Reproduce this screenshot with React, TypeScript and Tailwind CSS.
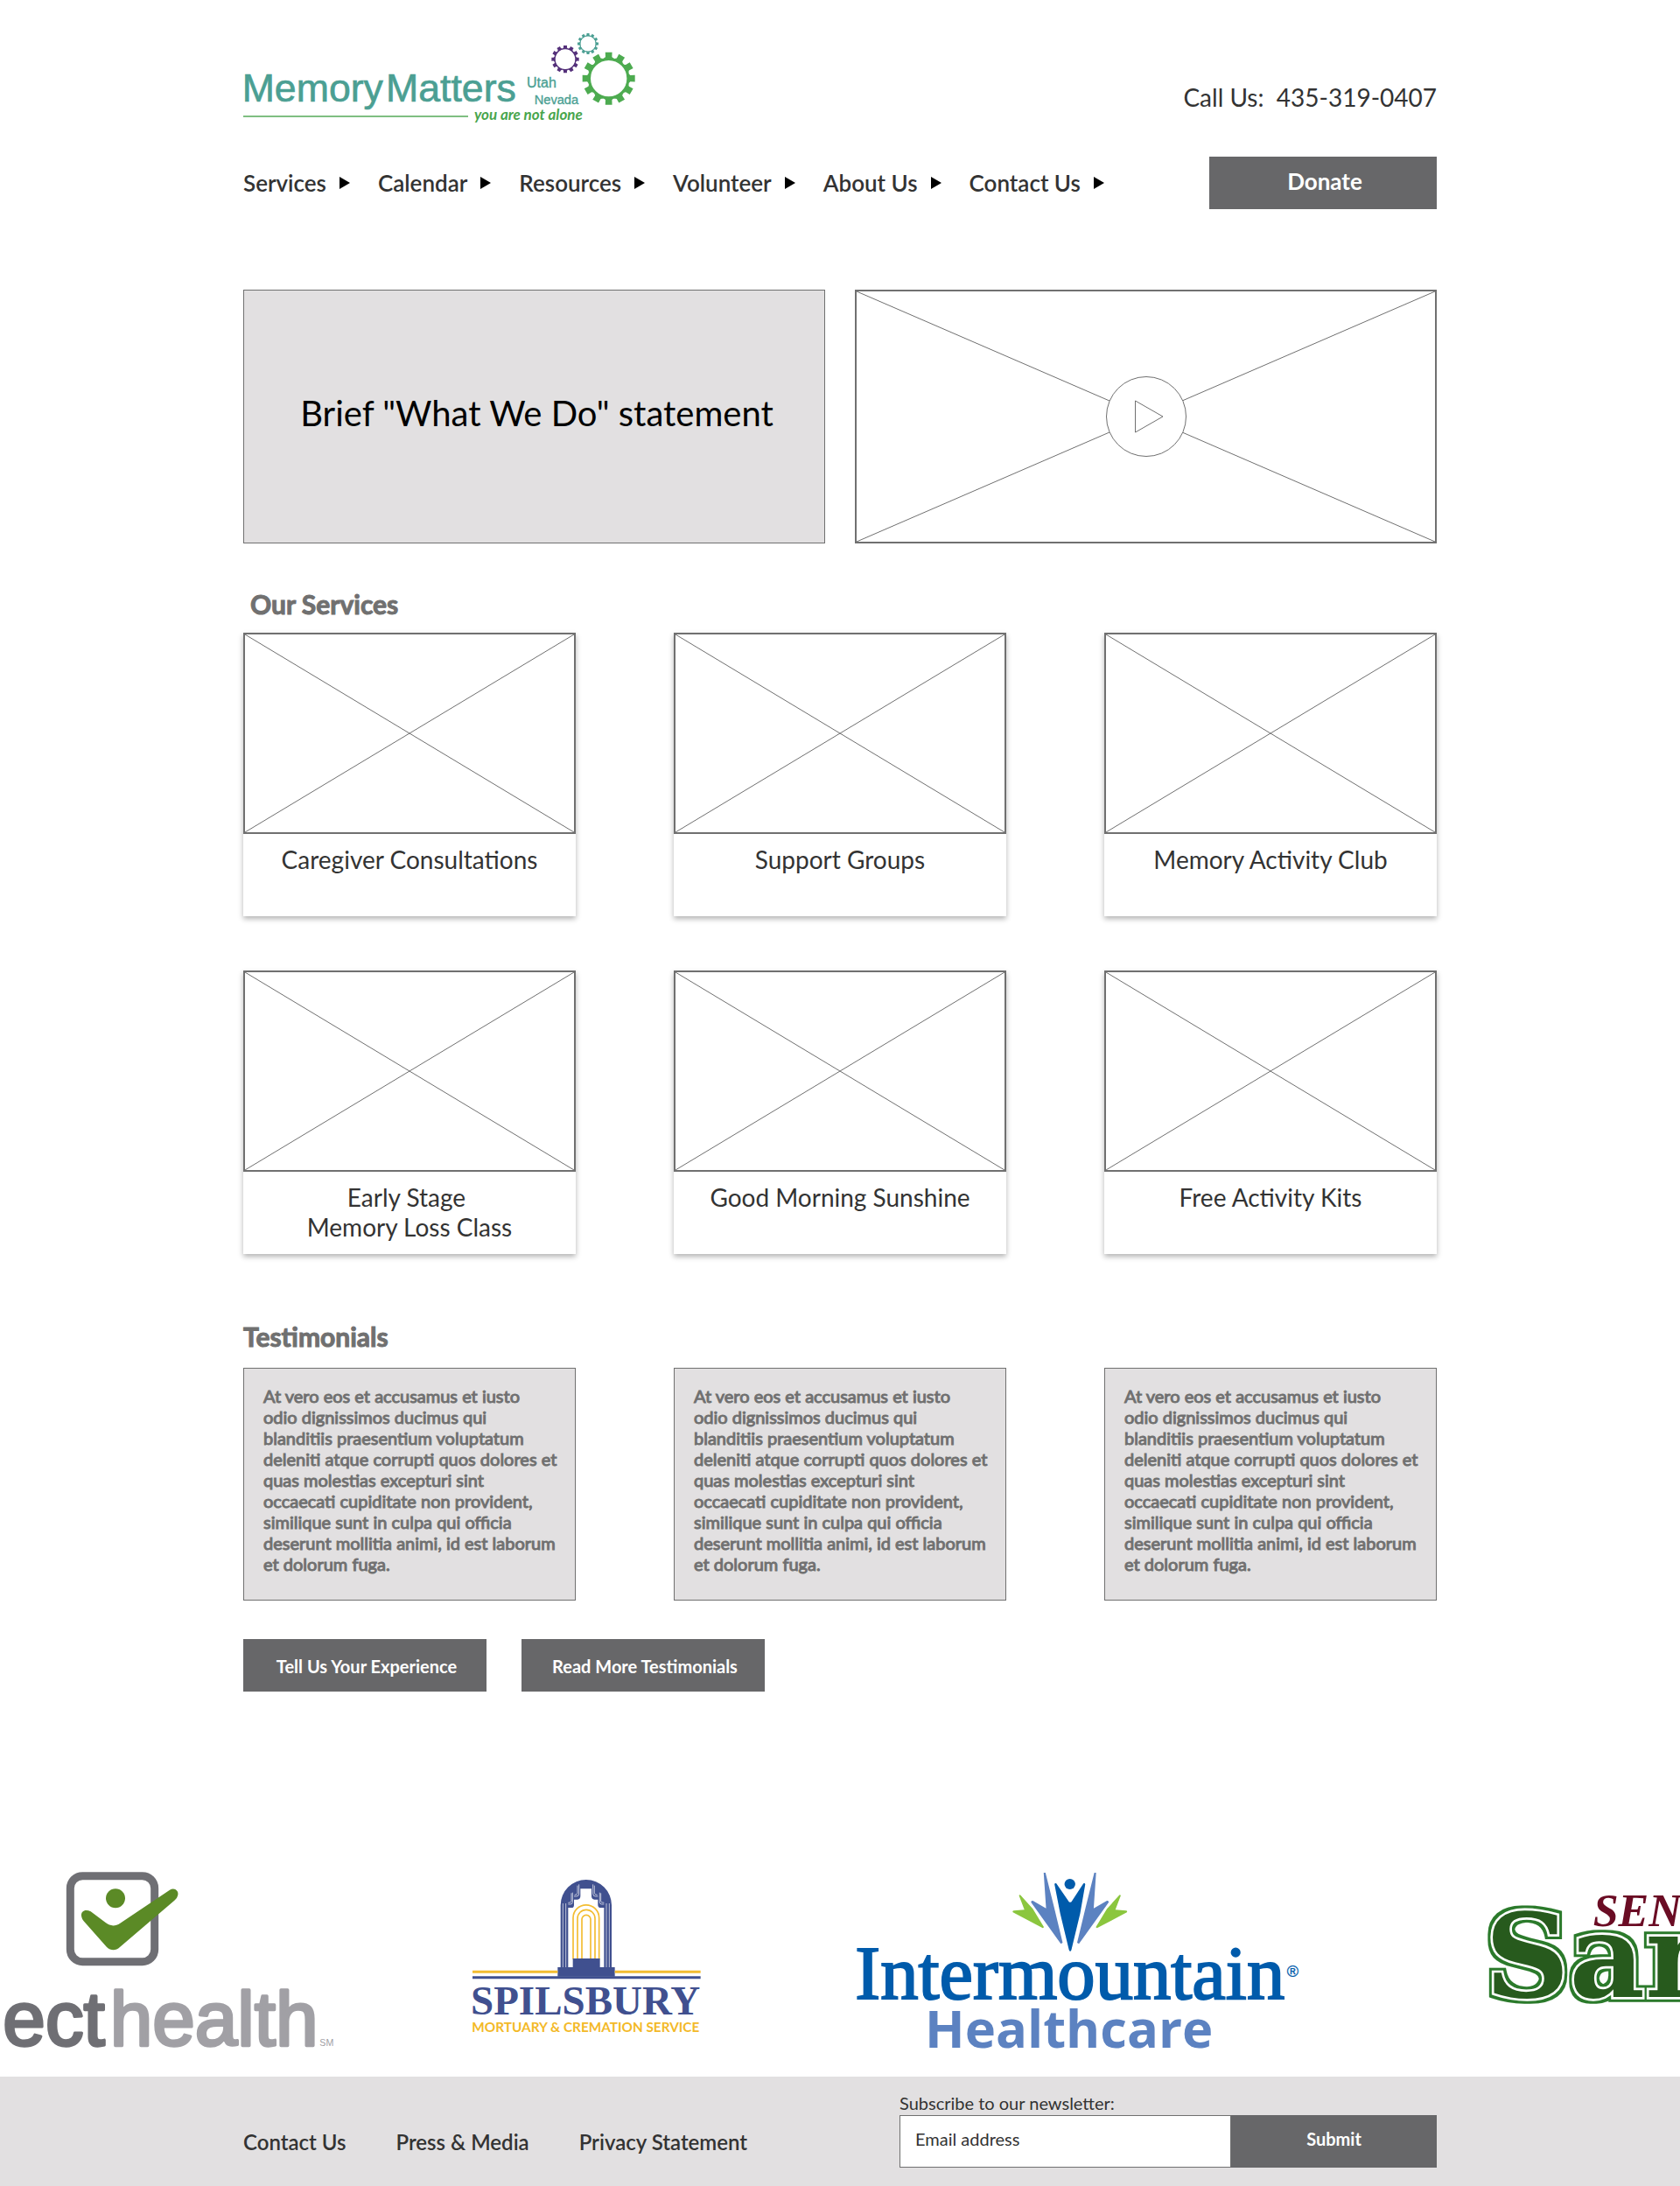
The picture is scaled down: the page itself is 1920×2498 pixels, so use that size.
import type { ReactNode } from "react";

const navItems = ["Services", "Calendar", "Resources", "Volunteer", "About Us", "Contact Us"];

const services: string[][] = [
  ["Caregiver Consultations"],
  ["Support Groups"],
  ["Memory Activity Club"],
  ["Early Stage\u00a0", "Memory Loss Class"],
  ["Good Morning Sunshine"],
  ["Free Activity Kits"],
];

const quote = `At vero eos et accusamus et iusto
odio dignissimos ducimus qui
blanditiis praesentium voluptatum
deleniti atque corrupti quos dolores et
quas molestias excepturi sint
occaecati cupiditate non provident,
similique sunt in culpa qui officia
deserunt mollitia animi, id est laborum
et dolorum fuga.`;

const footerLinks = ["Contact Us", "Press & Media", "Privacy Statement"];

function Container({ children }: { children: ReactNode }) {
  return (
    <div className="px-4">
      <div className="mx-auto max-w-[1364px]">{children}</div>
    </div>
  );
}

function Gear({ cx, cy, inner, body, outer, color }: { cx: number; cy: number; inner: number; body: number; outer: number; color: string }) {
  const half = outer * 0.13;
  const teeth = Array.from({ length: 12 }, (_, i) => i * 30);
  return (
    <g fill={color}>
      <circle cx={cx} cy={cy} r={(inner + body) / 2} fill="none" stroke={color} strokeWidth={body - inner} />
      {teeth.map((a) => (
        <path
          key={a}
          transform={`rotate(${a} ${cx} ${cy})`}
          d={`M${cx - half} ${cy - outer} H${cx + half} L${cx + half * 0.95} ${cy - body - 3} Q${cx + half * 1.1} ${cy - body} ${cx + half * 1.6} ${cy - body + 3} H${cx - half * 1.6} Q${cx - half * 1.1} ${cy - body} ${cx - half * 0.95} ${cy - body - 3} Z`}
        />
      ))}
    </g>
  );
}

function MemoryMattersLogo() {
  return (
    <svg viewBox="54 55 1350 330" className="h-[110px] w-[450px]" role="img" aria-label="Memory Matters Utah Nevada">
      <g fill="#4b9f93" fontFamily="'Liberation Sans', sans-serif">
        <text x="50" y="289" fontSize="134" stroke="#4b9f93" strokeWidth="2">Memory</text>
        <text x="543" y="289" fontSize="134" stroke="#4b9f93" strokeWidth="2">Matters</text>
        <text x="1026" y="240" fontSize="48" stroke="#4b9f93" strokeWidth="1">Utah</text>
        <text x="1052" y="297" fontSize="44" stroke="#4b9f93" strokeWidth="1">Nevada</text>
      </g>
      <path d="M52 340H825" stroke="#55aa58" strokeWidth="4" />
      <text x="846" y="352" fontSize="51" fontWeight="700" fontStyle="italic" fill="#48a54c" fontFamily="Lato, sans-serif">
        you are not alone
      </text>
      <Gear cx={1158} cy={144} inner={34} body={38} outer={47} color="#54307a" />
      <Gear cx={1236} cy={91} inner={26} body={29} outer={36} color="#4b9f93" />
      <Gear cx={1307} cy={210} inner={62} body={71} outer={90} color="#4dab50" />
    </svg>
  );
}

function CrossBox() {
  return (
    <svg viewBox="0 0 100 100" preserveAspectRatio="none" aria-hidden="true" className="absolute inset-0 h-full w-full">
      <path d="M0 0L100 100M100 0L0 100" stroke="#707070" strokeWidth="1" vectorEffect="non-scaling-stroke" />
    </svg>
  );
}

function SelectHealthLogo() {
  return (
    <svg viewBox="0 0 1200 720" className="h-[240px] w-[400px] shrink-0" role="img" aria-label="Select Health">
      <rect x="241" y="71" width="289" height="294" rx="42" fill="none" stroke="#6f6f74" strokeWidth="27" />
      <circle cx="396" cy="148" r="33" fill="#5b8a26" />
      <path
        d="M279 208C277 190 294 184 311 193L363 232C378 244 396 244 412 233L582 119C600 108 617 125 608 142C606 148 602 152 598 155L411 315C397 328 380 328 366 315L287 226C282 220 280 214 279 208Z"
        fill="#5b8a26"
      />
      <g fontFamily="'Liberation Sans', Arial, sans-serif" strokeLinejoin="round" strokeWidth="10">
        <text x="10" y="650" fontSize="262" fill="#6f6f74" stroke="#6f6f74">ect</text>
        <text x="377" y="650" fontSize="262" fill="#a1a0a5" stroke="#a1a0a5">health</text>
        <text x="1096" y="654" fontSize="32" fill="#a1a0a5">SM</text>
      </g>
    </svg>
  );
}

function SpilsburyLogo() {
  return (
    <svg viewBox="30 0 840 720" className="h-[240px] w-[280px] shrink-0" role="img" aria-label="Spilsbury Mortuary & Cremation Service">
      <path d="M362 386V171A87.500 87 0 0 1 537 171V386Z" fill="#40508f" />
      <path d="M388 386V180H400Q408 180 408 170V152H420Q430 150 430 140V115H468V140Q468 150 478 152H490V170Q490 180 500 180H511V386Z" fill="#fff" />
      <g fill="none" stroke="#fff" strokeWidth="2">
        <path d="M370 165V386M380 165V386M519 165V386M529 165V386" />
        <path d="M388 168H396Q403 168 403 160V128M399 130V158Q398 163 388 163" />
        <path d="M408 141H416Q425 141 425 132V100M420 104V130Q419 136 410 136" />
        <path d="M511 168H503Q496 168 496 160V128M500 130V158Q501 163 511 163" />
        <path d="M490 141H482Q473 141 473 132V100M478 104V130Q479 136 488 136" />
      </g>
      <g fill="none" stroke="#f3bd32" strokeWidth="5">
        <path d="M405 356V215A44.500 44.500 0 0 1 494 215V356" />
        <path d="M420 356V217A30 30 0 0 1 480 217V356" />
        <path d="M435 356V220A15 15 0 0 1 465 220V356" />
      </g>
      <path d="M404 354H497V384H548V416H352V384H404Z" fill="#40508f" />
      <path d="M60 399.500H352M548 399.500H842" stroke="#f3bd32" strokeWidth="9" />
      <path d="M60 419H842" stroke="#40508f" strokeWidth="9" />
      <text x="54" y="546" fontSize="141" fontWeight="700" fill="#40508f" fontFamily="'Liberation Serif', serif">SPILSBURY</text>
      <text x="58" y="606" fontSize="46" fontWeight="700" fill="#f3b928" fontFamily="Lato, sans-serif">MORTUARY &amp; CREMATION SERVICE</text>
    </svg>
  );
}

function IntermountainLogo() {
  const side = (
    <>
      <path d="M676 60H682L711 180L739 300L733 304L634 161Q634 155 640 156L684 182Z" fill="#5c82c1" />
      <path d="M594 138Q597 133 600 138L640 184L677 247L673 250L574 196Q571 191 577 190L612 187Z" fill="#8bc63e" />
    </>
  );
  return (
    <svg viewBox="-60 0 1770 720" className="h-[240px] w-[590px] shrink-0" role="img" aria-label="Intermountain Healthcare">
      <g transform="scale(1.033 1)">
        {side}
        <g transform="translate(1526 0) scale(-1 1)">{side}</g>
        <circle cx="763" cy="99" r="18" fill="#005bab" />
        <path d="M712 100Q713 94 718 97L757 155Q764 168 771 155L808 97Q813 94 814 100L797 200L768 325Q764 334 760 325L731 200Z" fill="#005bab" />
      </g>
      <text x="52" y="491" fontSize="260" fill="#005bab" stroke="#005bab" strokeWidth="6" fontFamily="'Liberation Serif', serif">Intermountain</text>
      <text x="1532" y="416" fontSize="54" fill="#005bab" stroke="#005bab" strokeWidth="1" fontFamily="'Liberation Sans', sans-serif">®</text>
      <text x="291" y="660" fontSize="179" fontWeight="700" fill="#5c82c1" fontFamily="'Open Sans', sans-serif">Healthcare</text>
    </svg>
  );
}

function SeniorLogo() {
  return (
    <svg viewBox="0 0 780 720" className="h-[240px] w-[260px] shrink-0" role="img" aria-label="Senior sponsor">
      <defs>
        <filter id="green-outline" x="-10%" y="-10%" width="120%" height="120%" colorInterpolationFilters="sRGB">
          <feMorphology in="SourceAlpha" operator="dilate" radius="9" result="grown" />
          <feFlood floodColor="#2b7a2b" />
          <feComposite in2="grown" operator="in" result="edge" />
          <feMerge>
            <feMergeNode in="edge" />
            <feMergeNode in="SourceGraphic" />
          </feMerge>
        </filter>
      </defs>
      <text
        x="112"
        y="487"
        fontSize="400"
        fontWeight="700"
        fontFamily="'DejaVu Serif', serif"
        fill="#275a1d"
        stroke="#fff"
        strokeWidth="16"
        paintOrder="stroke"
        filter="url(#green-outline)"
      >
        San
      </text>
      <text x="482" y="243" fontSize="156" fontWeight="700" fontStyle="italic" fill="#6a0c24" fontFamily="'Liberation Serif', serif">SEN</text>
    </svg>
  );
}

export default function App() {
  return (
    <div className="bg-white font-['Lato',sans-serif] text-[#333333]">
      <Container>
        <header className="pt-[38px]">
          <div className="flex items-center justify-between">
            <a href="#home">
              <MemoryMattersLogo />
            </a>
            <p className="pt-9 text-[28px] leading-[34px] whitespace-pre">{"Call Us:  435-319-0407"}</p>
          </div>
          <div className="mt-[31px] flex items-center justify-between">
            <nav className="flex gap-8">
              {navItems.map((item) => (
                <a key={item} href="#menu" className="flex items-center gap-[15px] text-[26px] leading-8 font-semibold">
                  {item}
                  <svg viewBox="0 0 12 14" aria-hidden="true" className="h-[14px] w-3">
                    <path d="M0 0L12 7L0 14Z" fill="#000" />
                  </svg>
                </a>
              ))}
            </nav>
            <button type="button" className="h-[60px] w-[260px] bg-[#676769] pb-1 pl-1 text-[26px] font-bold text-white">
              Donate
            </button>
          </div>
        </header>
      </Container>

      <main>
        <Container>
          <section className="mt-[92px] grid grid-cols-2 gap-[34px]">
            <div className="flex h-[290px] items-center justify-center border border-[#707070] bg-[#e2e0e1] pb-2 pl-1.5">
              <h1 className="text-[40px] leading-[48px] text-black">Brief "What We Do" statement</h1>
            </div>
            <div className="relative flex items-center justify-center border-2 border-[#707070]">
              <CrossBox />
              <button type="button" aria-label="Play video" className="relative h-[92px] w-[92px] rounded-full border border-[#707070] bg-white">
                <svg viewBox="0 0 90 90" className="h-full w-full" fill="none" stroke="#707070" strokeWidth="1" aria-hidden="true">
                  <path d="M32.500 27V63L64 45Z" />
                </svg>
              </button>
            </div>
          </section>

          <section className="mt-[51px]">
            <h2 className="pl-2 text-[30px] leading-9 font-bold text-[#707070] [-webkit-text-stroke:1px_#707070]">Our Services</h2>
            <div className="mt-[15px] grid grid-cols-3 gap-x-28 gap-y-[62px]">
              {services.map((lines) => (
                <article key={lines[0]} className="shadow-[0_3px_6px_rgba(0,0,0,0.3)]">
                  <div className="relative h-[230px] border-2 border-[#707070]">
                    <CrossBox />
                  </div>
                  <h3 className="min-h-[94px] pt-3 text-center text-[28px] leading-[34px]">
                    {lines.map((line) => (
                      <span key={line} className="block">
                        {line}
                      </span>
                    ))}
                  </h3>
                </article>
              ))}
            </div>
          </section>

          <section className="mt-[76px]">
            <h2 className="text-[30px] leading-9 font-bold text-[#707070] [-webkit-text-stroke:1px_#707070]">Testimonials</h2>
            <div className="mt-[18px] grid grid-cols-3 gap-x-28">
              {[0, 1, 2].map((i) => (
                <blockquote
                  key={i}
                  className="border border-[#707070] bg-[#e2e0e1] pt-[19px] pr-4 pb-[29px] pl-[22px] text-[20px] leading-6 whitespace-pre-line text-[#707070] [-webkit-text-stroke:1px_#707070]"
                >
                  {quote}
                </blockquote>
              ))}
            </div>
            <div className="mt-11 flex gap-10">
              {["Tell Us Your Experience", "Read More Testimonials"].map((label) => (
                <button key={label} type="button" className="h-[60px] w-[278px] bg-[#676769] pt-0.5 pl-1 text-[20px] font-bold text-white">
                  {label}
                </button>
              ))}
            </div>
          </section>
        </Container>

        <section aria-label="Sponsors" className="mt-[187px] flex justify-between overflow-hidden">
          <SelectHealthLogo />
          <SpilsburyLogo />
          <IntermountainLogo />
          <SeniorLogo />
        </section>
      </main>

      <footer className="mt-[13px] bg-[#e2e0e1] pt-[18px] pb-[21px]">
        <Container>
          <div className="flex items-end justify-between">
            <nav className="flex h-[60px] items-center gap-[57px] pt-0.5 text-[24px] font-semibold">
              {footerLinks.map((link) => (
                <a key={link} href="#footer">
                  {link}
                </a>
              ))}
            </nav>
            <form className="w-[614px]">
              <label htmlFor="email" className="mb-0.5 block text-[20px] leading-6">
                Subscribe to our newsletter:
              </label>
              <div className="flex h-[60px]">
                <input
                  id="email"
                  type="email"
                  placeholder="Email address"
                  className="min-w-0 flex-1 border border-[#707070] bg-white px-[17px] pb-1.5 text-[20px] placeholder:text-[#333333]"
                />
                <button type="button" className="w-[235px] bg-[#676769] pb-1.5 text-[20px] font-bold text-white">
                  Submit
                </button>
              </div>
            </form>
          </div>
        </Container>
      </footer>
    </div>
  );
}
